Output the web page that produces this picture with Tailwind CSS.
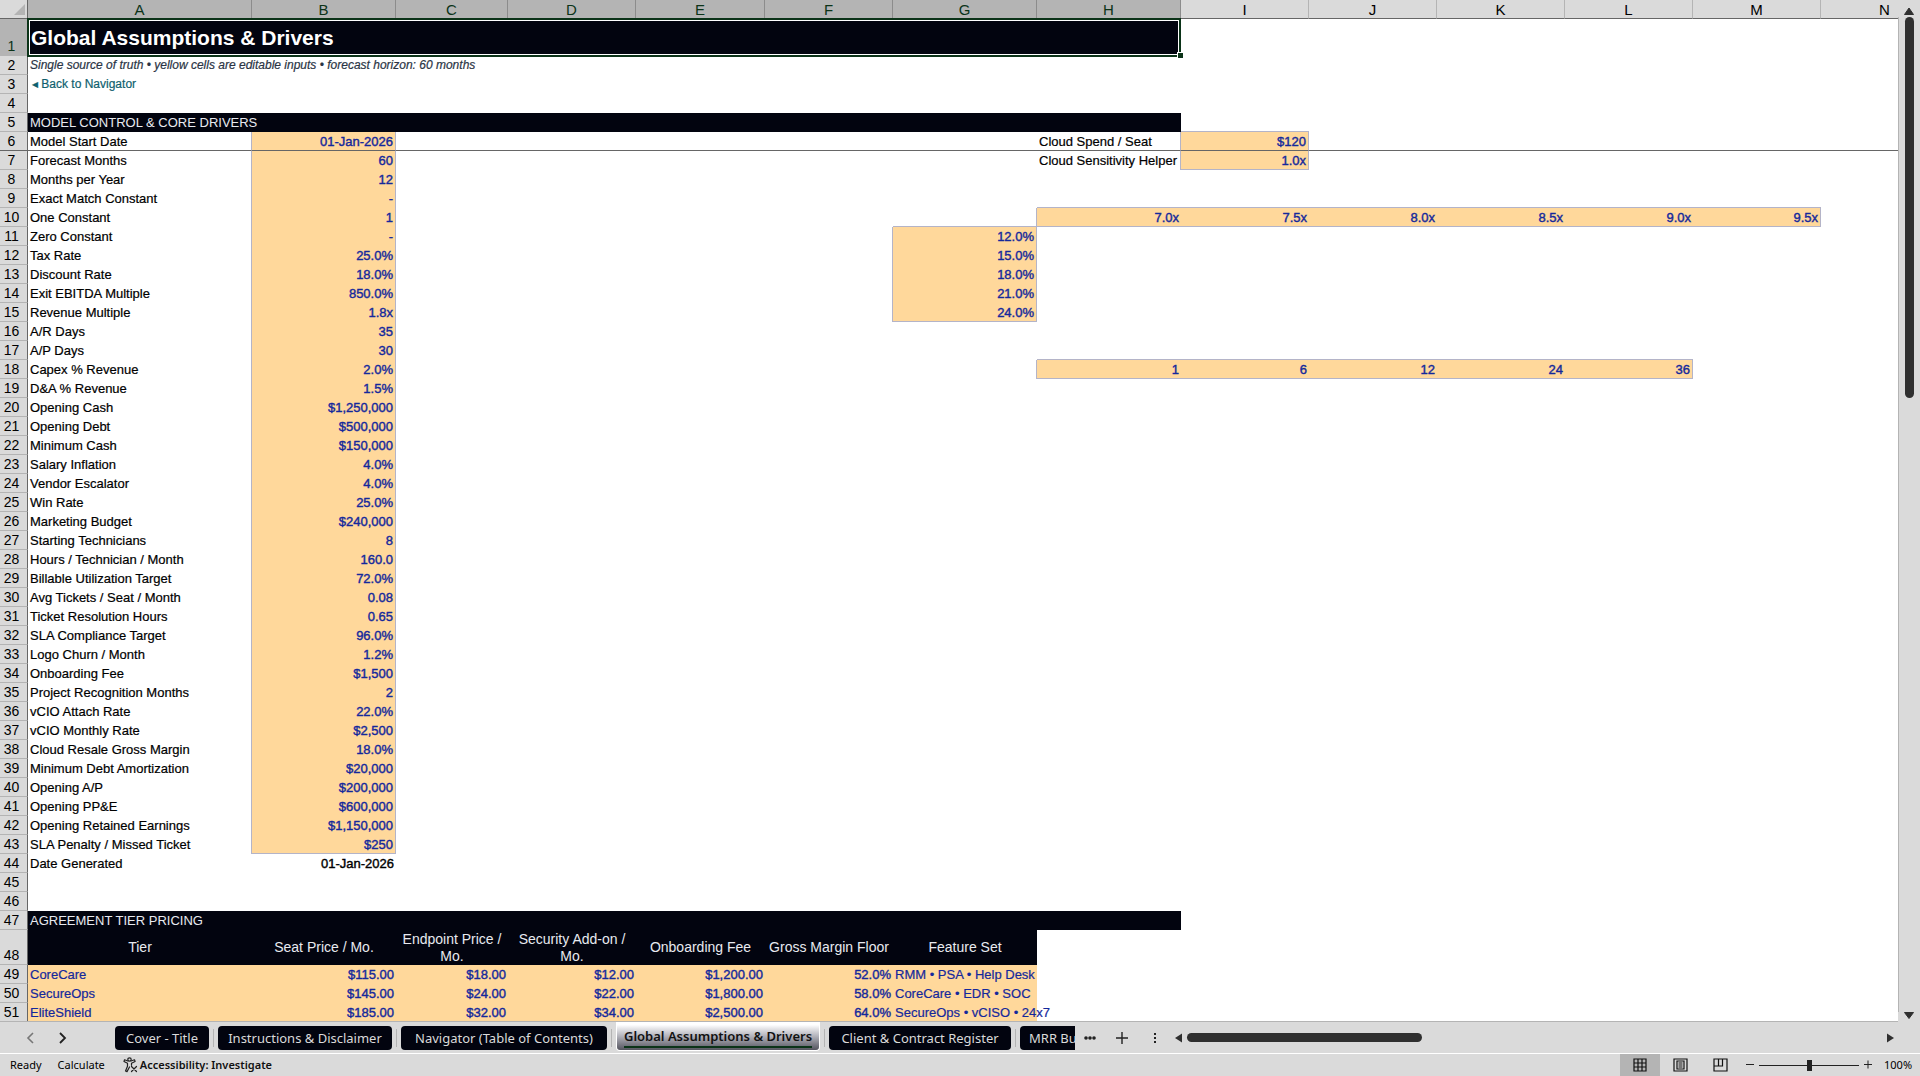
<!DOCTYPE html>
<html lang="en">

<head>
    <meta charset="UTF-8">
    <meta name="viewport" content="width=device-width, initial-scale=1.0">
    <title>Global Assumptions &amp; Drivers</title>
    <script src="https://cdn.jsdelivr.net/npm/@tailwindcss/browser@4"></script>
</head>

<body class="h-screen flex flex-col overflow-hidden bg-[#dadada] text-black font-['Liberation_Sans',Arial,sans-serif]">
    <main class="flex flex-1 min-h-0">
        <div class="flex-1 min-w-0 overflow-hidden bg-white border-b border-[#b4b4b4]">
            <table class="table-fixed border-separate border-spacing-0 w-[1949px] text-[13px] leading-4 whitespace-nowrap">
                <colgroup>
                    <col class="w-7">
                    <col class="w-56">
                    <col class="w-36">
                    <col class="w-28">
                    <col class="w-32">
                    <col class="w-[129px]">
                    <col class="w-32">
                    <col class="w-36">
                    <col class="w-36">
                    <col class="w-32">
                    <col class="w-32">
                    <col class="w-32">
                    <col class="w-32">
                    <col class="w-32">
                    <col class="w-32">
                </colgroup>
                <thead id="column-heads"></thead>
                <tbody id="sheet"></tbody>
            </table>
        </div>

        <!-- vertical scrollbar -->
        <div class="w-[22px] flex flex-col items-center pt-[5px] pb-[3px]">
            <button aria-label="Scroll up" class="h-3"><svg width="10" height="7" class="block" fill="#2f2f2f"><path d="M5 0 9.5 6.5H.5z" stroke="#2f2f2f" stroke-linejoin="round" /></svg></button>
            <div class="flex-1 w-full border-l border-[#b4b4b4] flex justify-center">
                <div class="w-[9px] h-[381px] rounded-full bg-[#2f2f2f]"></div>
            </div>
            <button aria-label="Scroll down"><svg width="10" height="7" class="block" fill="#2f2f2f"><path d="M5 6.5 9.5 .5H.5z" stroke="#2f2f2f" stroke-linejoin="round" /></svg></button>
        </div>
    </main>

    <!-- sheet tabs -->
    <nav class="h-8 shrink-0 flex items-center border-b border-white text-[13px] leading-5 whitespace-nowrap font-['Noto_Sans',sans-serif]">
        <div class="w-[115px] shrink-0 flex items-center pl-[26px] gap-[25px]">
            <button aria-label="Previous sheet"><svg width="8" height="12" fill="none" stroke="#777" stroke-width="1.6"><path d="M7 1 2 6l5 5" /></svg></button>
            <button aria-label="Next sheet"><svg width="8" height="12" fill="none" stroke="#222" stroke-width="1.8"><path d="m1 1 5 5-5 5" /></svg></button>
        </div>
        <div class="w-[960px] shrink-0 h-full overflow-hidden flex items-center gap-1">
            <button class="w-[94px] h-6 shrink-0 rounded bg-[#02040f] text-[#dadada]">Cover - Title</button>
            <span class="w-px h-[18px] shrink-0 bg-[#b4b4b4]"></span>
            <button class="w-[174px] h-6 shrink-0 rounded bg-[#02040f] text-[#dadada]">Instructions &amp; Disclaimer</button>
            <span class="w-px h-[18px] shrink-0 bg-[#b4b4b4]"></span>
            <button class="w-[206px] h-6 shrink-0 rounded bg-[#02040f] text-[#dadada]">Navigator (Table of Contents)</button>
            <span class="w-px h-[18px] shrink-0 bg-[#b4b4b4]"></span>
            <button class="w-[204px] h-[29px] self-start shrink-0 rounded-b border border-t-0 border-white bg-linear-to-b from-white from-10% via-[#b4b4bc] via-50% to-[#55555f] px-1 flex justify-center font-semibold text-[#111]"><span class="block h-[26px] pt-1 border-b-2 border-[#0b3318]">Global Assumptions &amp; Drivers</span></button>
            <span class="w-px h-[18px] shrink-0 bg-[#b4b4b4]"></span>
            <button class="w-[182px] h-6 shrink-0 rounded bg-[#02040f] text-[#dadada]">Client &amp; Contract Register</button>
            <span class="w-px h-[18px] shrink-0 bg-[#b4b4b4]"></span>
            <button class="w-[120px] h-6 shrink-0 rounded bg-[#02040f] text-[#dadada] text-left pl-[9px]">MRR Build</button>
        </div>
        <div class="flex-1 flex items-center pl-2">
            <button aria-label="More sheets"><svg width="14" height="4" fill="#222"><circle cx="3" cy="2" r="1.8" /><circle cx="7" cy="2" r="1.8" /><circle cx="11" cy="2" r="1.8" /></svg></button>
            <button aria-label="New sheet" class="ml-[18px]"><svg width="14" height="14" stroke="#222" stroke-width="1.4"><path d="M7 1v12M1 7h12" /></svg></button>
            <span class="ml-[24px]"><svg width="4" height="12" fill="#222"><rect x="1" y="1" width="2" height="2" /><rect x="1" y="5" width="2" height="2" /><rect x="1" y="9" width="2" height="2" /></svg></span>
            <button aria-label="Scroll left" class="ml-[18px]"><svg width="8" height="10" fill="#2f2f2f"><path d="M0 5 7 .5v9z" /></svg></button>
            <div class="flex-1 ml-1">
                <div class="w-[235px] h-[9px] rounded-full bg-[#2f2f2f]"></div>
            </div>
            <button aria-label="Scroll right" class="mr-[26px]"><svg width="8" height="10" fill="#2f2f2f"><path d="M8 5 1 .5v9z" /></svg></button>
        </div>
    </nav>

    <!-- status bar -->
    <footer class="h-[22px] shrink-0 flex items-center text-[11px] font-['Noto_Sans',sans-serif]">
        <span class="ml-[10px] pt-px">Ready</span>
        <span class="ml-4 pt-px">Calculate</span>
        <button class="ml-[18px] flex items-center gap-0.5 font-semibold text-[#111]">
            <svg width="15" height="16" viewBox="0 0 15 16" fill="none" stroke="#222" stroke-width="1.2" stroke-linejoin="round" stroke-linecap="round">
                <circle cx="6.5" cy="2.5" r="1.7" />
                <path d="M5 4 1.5 2.800 1 4.500l3.500 1.700v3L2.500 14l1.500.6L6.500 10M8 4l3.500-1.200.6 1.700-3.600 1.700v2M8.500 9.500l5 5M13.500 9.500l-5 5" />
            </svg>
            Accessibility: Investigate
        </button>
        <div class="ml-auto flex items-center h-full">
            <button aria-label="Normal" class="w-10 h-full flex items-center justify-center bg-[#b4b4b4]"><svg width="14" height="14" fill="none" stroke="#111" stroke-width="1.2"><path d="M1 1h12v12H1zM5 1v12M9 1v12M1 5h12M1 9h12" /></svg></button>
            <button aria-label="Page layout" class="w-10 h-full flex items-center justify-center"><svg width="15" height="14" fill="none" stroke="#111" stroke-width="1.2"><path d="M1 1h13v12H1zM4 3h7v8H4zM5.5 5h4M5.5 7h4M5.5 9h4" /></svg></button>
            <button aria-label="Page break preview" class="w-10 h-full flex items-center justify-center"><svg width="15" height="14" fill="none" stroke="#111" stroke-width="1.2"><path d="M1 1h13v12H1zM1 8h8.5V1M5.5 1v7" /></svg></button>
            <button aria-label="Zoom out" class="ml-1"><svg width="12" height="12" stroke="#222"><path d="M2 5.500h8" /></svg></button>
            <input type="range" aria-label="Zoom" min="10" max="190" value="100" class="mx-[3px] w-[100px] h-3 appearance-none bg-[linear-gradient(#222,#222)] bg-[length:100%_1px] bg-center bg-no-repeat [&::-webkit-slider-thumb]:appearance-none [&::-webkit-slider-thumb]:w-[5px] [&::-webkit-slider-thumb]:h-[11px] [&::-webkit-slider-thumb]:bg-[#222]">
            <button aria-label="Zoom in"><svg width="12" height="12" stroke="#222"><path d="M2 5.500h8M6 1.500v8" /></svg></button>
            <span class="ml-[10px] w-9">100%</span>
        </div>
    </footer>

    <script>
        const COLUMNS = ["A", "B", "C", "D", "E", "F", "G", "H", "I", "J", "K", "L", "M", "N"];

        const drivers = [
            ["Model Start Date", "01-Jan-2026"],
            ["Forecast Months", "60"],
            ["Months per Year", "12"],
            ["Exact Match Constant", "-"],
            ["One Constant", "1"],
            ["Zero Constant", "-"],
            ["Tax Rate", "25.0%"],
            ["Discount Rate", "18.0%"],
            ["Exit EBITDA Multiple", "850.0%"],
            ["Revenue Multiple", "1.8x"],
            ["A/R Days", "35"],
            ["A/P Days", "30"],
            ["Capex % Revenue", "2.0%"],
            ["D&amp;A % Revenue", "1.5%"],
            ["Opening Cash", "$1,250,000"],
            ["Opening Debt", "$500,000"],
            ["Minimum Cash", "$150,000"],
            ["Salary Inflation", "4.0%"],
            ["Vendor Escalator", "4.0%"],
            ["Win Rate", "25.0%"],
            ["Marketing Budget", "$240,000"],
            ["Starting Technicians", "8"],
            ["Hours / Technician / Month", "160.0"],
            ["Billable Utilization Target", "72.0%"],
            ["Avg Tickets / Seat / Month", "0.08"],
            ["Ticket Resolution Hours", "0.65"],
            ["SLA Compliance Target", "96.0%"],
            ["Logo Churn / Month", "1.2%"],
            ["Onboarding Fee", "$1,500"],
            ["Project Recognition Months", "2"],
            ["vCIO Attach Rate", "22.0%"],
            ["vCIO Monthly Rate", "$2,500"],
            ["Cloud Resale Gross Margin", "18.0%"],
            ["Minimum Debt Amortization", "$20,000"],
            ["Opening A/P", "$200,000"],
            ["Opening PP&amp;E", "$600,000"],
            ["Opening Retained Earnings", "$1,150,000"],
            ["SLA Penalty / Missed Ticket", "$250"],
            ["Date Generated", "01-Jan-2026"]
        ];

        const tierHeads = ["Tier", "Seat Price / Mo.", "Endpoint Price / Mo.", "Security Add-on / Mo.", "Onboarding Fee", "Gross Margin Floor", "Feature Set"];
        const tiers = [
            ["CoreCare", "$115.00", "$18.00", "$12.00", "$1,200.00", "52.0%", "RMM • PSA • Help Desk"],
            ["SecureOps", "$145.00", "$24.00", "$22.00", "$1,800.00", "58.0%", "CoreCare • EDR • SOC"],
            ["EliteShield", "$185.00", "$32.00", "$34.00", "$2,500.00", "64.0%", "SecureOps • vCISO • 24x7"]
        ];

        // values to the right of the driver list, by row and column
        const extras = {
            6: { I: "$120" },
            7: { I: "1.0x" },
            10: { H: "7.0x", I: "7.5x", J: "8.0x", K: "8.5x", L: "9.0x", M: "9.5x" },
            11: { G: "12.0%" },
            12: { G: "15.0%" },
            13: { G: "18.0%" },
            14: { G: "21.0%" },
            15: { G: "24.0%" },
            18: { H: "1", I: "6", J: "12", K: "24", L: "36" }
        };
        const helperLabels = { 6: "Cloud Spend / Seat", 7: "Cloud Sensitivity Helper" };

        const inputCell = "h-[19px] p-0 pt-px pr-0.5 text-right bg-[#ffd89b] text-[#14289c] [-webkit-text-stroke:0.4px]";
        const labelCell = "h-[19px] p-0 pt-px pl-0.5 [-webkit-text-stroke:0.2px]";
        const noteCell = "h-[19px] p-0 pb-0.5 pl-0.5 text-xs";
        const bandCell = "h-[19px] p-0 pl-0.5 bg-[#02040f] text-[#e8eaf0] text-left font-normal";

        function isInput(row, col) {
            if (col === "B") return row >= 6 && row <= 43;
            return Boolean(extras[row] && extras[row][col]);
        }

        // an input block is outlined only on its outside edges
        function edges(row, col) {
            const next = COLUMNS[COLUMNS.indexOf(col) + 1];
            const own = isInput(row, col);
            let cls = "";
            if (own !== isInput(row, next)) cls += " border-r border-r-[#b4b4c8]";
            if (row === 6) cls += " border-b border-b-[#666]";
            else if (own !== isInput(row + 1, col)) cls += " border-b border-b-[#b4b4c8]";
            return cls;
        }

        function rowHead(row) {
            let cls = "h-[19px] bg-[#dadada]";
            let line = "border-b-[#b4b4b4]";
            if (row === 1) cls = "h-[37px] align-bottom bg-[#b4b4b4] text-[#0b3318]";
            if (row === 48) cls = "h-[35px] align-bottom bg-[#dadada]";
            if (row === 6) line = "border-b-[#666]";
            return `<th scope="row" class="${cls} p-0 pr-1 border-r border-r-[#666] border-b ${line} text-sm leading-[17px] font-normal text-center">${row}</th>`;
        }

        function driverRow(row) {
            const driver = drivers[row - 6] || ["", ""];
            return COLUMNS.map(col => {
                const edge = edges(row, col);
                if (col === "A") return `<td class="${labelCell}${edge}">${driver[0]}</td>`;
                if (col === "B" && row >= 44) return `<td class="h-[19px] p-0 pt-px pr-0.5 text-right [-webkit-text-stroke:0.4px]${edge}">${driver[1]}</td>`;
                if (isInput(row, col)) return `<td class="${inputCell}${edge}">${col === "B" ? driver[1] : extras[row][col]}</td>`;
                if (col === "H" && helperLabels[row]) return `<td class="${labelCell}${edge}">${helperLabels[row]}</td>`;
                return `<td class="${labelCell}${edge}"></td>`;
            }).join("");
        }

        function bodyRow(row) {
            if (row === 1) {
                return `<th colspan="8" class="relative p-0 pl-[3px] bg-[#02040f] text-white text-left text-[21px] font-bold">Global Assumptions &amp; Drivers
                    <div class="absolute -left-px right-0 -top-px -bottom-px border-2 border-[#0b3318] outline -outline-offset-3 outline-white"></div>
                    <div class="absolute -right-0.5 -bottom-0.5 size-[6px] bg-[#0b3318] border-t border-l border-white"></div></th><td colspan="6"></td>`;
            }
            if (row === 2) return `<td colspan="14" class="${noteCell} italic text-[#2a3444] [-webkit-text-stroke:0.2px]">Single source of truth • yellow cells are editable inputs • forecast horizon: 60 months</td>`;
            if (row === 3) return `<td colspan="14" class="${noteCell}"><a href="#" class="pl-0.5 text-[#0f5f6e] [-webkit-text-stroke:0.2px]">◂ Back to Navigator</a></td>`;
            if (row === 4) return `<td colspan="14" class="${labelCell}"></td>`;
            if (row === 5) return `<th colspan="8" class="${bandCell}">MODEL CONTROL &amp; CORE DRIVERS</th><td class="p-0 border-b border-[#b4b4c8]"></td><td colspan="5"></td>`;
            if (row === 47) return `<th colspan="8" class="${bandCell}">AGREEMENT TIER PRICING</th><td colspan="6"></td>`;
            if (row === 48) return tierHeads.map(h => `<th scope="col" class="p-0 px-0.5 bg-[#02040f] text-[#e8eaf0] text-sm leading-[17px] font-normal whitespace-normal">${h}</th>`).join("") + `<td colspan="7"></td>`;
            if (row > 48) {
                return tiers[row - 49].map((value, i) => {
                    const side = i === 0 || i === 6 ? "text-left pl-0.5 [-webkit-text-stroke:0.2px]" : "text-right pr-0.5 [-webkit-text-stroke:0.4px]";
                    return `<td class="h-[19px] p-0 ${side} bg-[#ffd89b] text-[#14289c]">${value}</td>`;
                }).join("") + `<td colspan="7"></td>`;
            }
            return driverRow(row);
        }

        document.getElementById("column-heads").innerHTML = `<tr>
            <td class="h-[19px] p-0 bg-[#dadada] border-b border-r border-[#666]"><svg width="11" height="11" class="ml-auto mr-0.5"><path d="M11 0v11H0z" fill="#b4b4b4" /></svg></td>
            ${COLUMNS.map((col, i) => `<th scope="col" class="h-[19px] p-0 pt-px ${i < 8 ? "bg-[#b4b4b4] text-[#0b3318] border-r-[#8c8c8c]" : "bg-[#dadada] border-r-[#b4b4b4]"} border-r border-b border-b-[#666] text-[15px] leading-[17px] font-normal">${col}</th>`).join("")}
        </tr>`;

        let html = "";
        for (let row = 1; row <= 51; row++) {
            html += `<tr>${rowHead(row)}${bodyRow(row)}</tr>`;
        }
        document.getElementById("sheet").innerHTML = html;
    </script>
</body>

</html>
